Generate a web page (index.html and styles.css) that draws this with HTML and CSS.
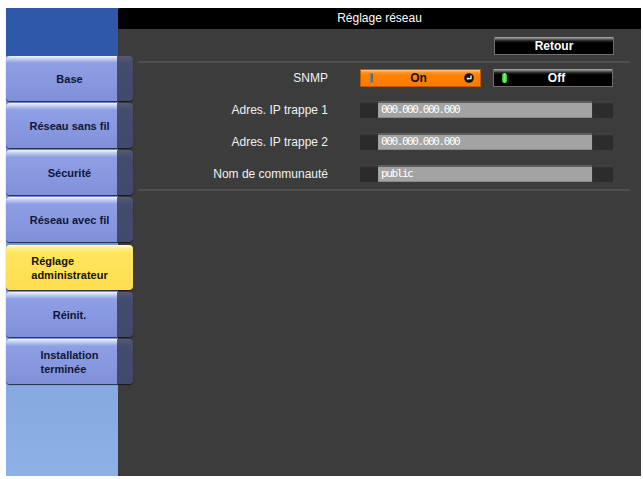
FILE: index.html
```html
<!DOCTYPE html>
<html lang="fr">
<head>
  <meta charset="UTF-8">
  <meta name="viewport" content="width=device-width, initial-scale=1.0">
  <title>Réglage réseau</title>
  <link rel="stylesheet" href="styles.css">
</head>
<body>

<div class="screen">

  <!-- Menu tabs -->
  <nav class="sidebar">
    <div class="sidebar-head"></div>
    <ul class="tabs">
      <li class="tab"><span>Base</span></li>
      <li class="tab"><span>Réseau sans fil</span></li>
      <li class="tab"><span>Sécurité</span></li>
      <li class="tab"><span>Réseau avec fil</span></li>
      <li class="tab active"><span class="multi">Réglage<br>administrateur</span></li>
      <li class="tab"><span>Réinit.</span></li>
      <li class="tab"><span class="multi">Installation<br>terminée</span></li>
    </ul>
  </nav>

  <!-- Settings panel -->
  <main class="panel">
    <div class="titlebar">Réglage réseau</div>
    <div class="panel-body">
      <div class="toolbar">
        <button class="btn-dark">Retour</button>
      </div>
      <hr class="rule">

      <div class="form">
        <label>SNMP</label>
        <div class="toggle">
          <button class="opt opt-on">
            <i class="knob"></i>
            <span class="opt-text">On</span>
            <svg class="enter" width="10" height="10" viewBox="0 0 10 10">
              <circle cx="5" cy="5" r="4.8" fill="#111"/>
              <path d="M7 2.6 V5.6 H3.6" fill="none" stroke="#fff" stroke-width="1.3"/>
              <path d="M2.4 5.6 L4.4 4 V7.2 Z" fill="#fff"/>
            </svg>
          </button>
          <button class="opt opt-off">
            <i class="led"></i>
            <span class="opt-text">Off</span>
          </button>
        </div>

        <label>Adres. IP trappe 1</label>
        <div class="field">
          <span class="field-cap"></span>
          <span class="field-value">000.000.000.000</span>
          <span class="field-end"></span>
        </div>

        <label>Adres. IP trappe 2</label>
        <div class="field">
          <span class="field-cap"></span>
          <span class="field-value">000.000.000.000</span>
          <span class="field-end"></span>
        </div>

        <label>Nom de communauté</label>
        <div class="field">
          <span class="field-cap"></span>
          <span class="field-value">public</span>
          <span class="field-end"></span>
        </div>
      </div>

      <hr class="rule rule-bottom">
    </div>
  </main>

</div>

</body>
</html>
```

FILE: styles.css
```css
/* Global */
* {
  box-sizing: border-box;
  margin: 0;
  padding: 0;
}
body {
  background: #fff;
  font-family: "Liberation Sans", Arial, sans-serif;
}
.screen {
  display: flex;
  width: 635px;
  height: 468px;
  margin: 8px 0 0 6px;
}

/* Sidebar */
.sidebar {
  width: 112px;
  flex-shrink: 0;
  position: relative;
  z-index: 1;
  background: linear-gradient(#6a8bc8, #8db1e6);
}
.sidebar-head {
  height: 48px;
  background: #2e58aa;
}
.tabs {
  list-style: none;
  display: flex;
  flex-direction: column;
  gap: 2px;
}
.tab {
  width: 127px;
  height: 45px;
  display: flex;
  align-items: center;
  justify-content: center;
  border-radius: 4px;
  font-size: 11px;
  font-weight: bold;
  color: #0e1636;
  background:
    linear-gradient(to right, transparent 111px, rgba(52, 58, 84, 0.82) 111px),
    linear-gradient(#f4f4ff 0, #c2ccf2 3px, #8f9fe4 7px, #8797e0 60%, #7f8fd8 100%);
  box-shadow: 0 1px 1px rgba(10, 14, 30, 0.8);
}
.tab:nth-child(5) {
  margin-top: 1px;
}
.tab .multi {
  display: inline-block;
  text-align: left;
  line-height: 14px;
}
.tab.active {
  background: linear-gradient(#fffbe0 0, #fff08a 3px, #ffe45e 8px, #ffde50 100%);
  color: #161000;
}

/* Panel */
.panel {
  flex: 1;
  background: #3c3c3c;
  display: flex;
  flex-direction: column;
}
.titlebar {
  height: 21px;
  line-height: 21px;
  background: #000;
  color: #fff;
  font-size: 12px;
  text-align: center;
  border-top-left-radius: 3px;
}
.panel-body {
  padding: 0 11px 0 20px;
}
.toolbar {
  display: flex;
  justify-content: flex-end;
  padding: 8px 16px 0 0;
}
.btn-dark {
  width: 120px;
  height: 18px;
  border: 1px solid #6e6e6e;
  border-top: none;
  background: linear-gradient(#b0b0b0 0, #6a6a6a 2px, #1c1c1c 4px, #000 6px);
  color: #fff;
  font: bold 12px "Liberation Sans", Arial, sans-serif;
  padding-top: 1px;
}
.rule {
  border: none;
  height: 2px;
  margin-top: 6px;
  background: linear-gradient(#555, #4a4a4a);
}
.rule-bottom {
  margin-top: 6px;
}

/* Form rows */
.form {
  display: grid;
  grid-template-columns: 190px 253px;
  grid-auto-rows: 18px;
  column-gap: 32px;
  row-gap: 14px;
  margin-top: 6px;
}
.form label {
  text-align: right;
  color: #f2f2f2;
  font-size: 12px;
  line-height: 18px;
}
.toggle {
  display: flex;
  gap: 12px;
}
.opt {
  height: 18px;
  display: flex;
  align-items: center;
  padding: 0 6px 0 8px;
  font: bold 12px "Liberation Sans", Arial, sans-serif;
}
.opt-text {
  flex: 1;
  text-align: center;
}
.opt-on {
  width: 121px;
  border: 1px solid #c05a00;
  background: linear-gradient(#ffcf9a 0, #ff9a30 2px, #ff8200 5px, #ff7a00 100%);
  color: #101010;
}
.opt-off {
  width: 120px;
  border: 1px solid #6e6e6e;
  border-top: none;
  background: linear-gradient(#b0b0b0 0, #6a6a6a 2px, #1c1c1c 4px, #000 6px);
  color: #fff;
}
.knob {
  width: 4px;
  height: 10px;
  border-radius: 2px;
  background: linear-gradient(to right, #9a9a9a, #5a5a5a);
}
.enter {
  display: block;
}
.led {
  width: 5px;
  height: 10px;
  border-radius: 3px;
  background: linear-gradient(to right, #1fa01f, #7cff6a 45%, #2ac22a);
}

/* Text fields */
.field {
  display: flex;
  height: 17px;
}
.field-cap {
  width: 18px;
  background: linear-gradient(#444 0, #2a2a2a 3px);
}
.field-value {
  flex: 1;
  background: #a3a3a3;
  border-top: 2px solid #5e5e5e;
  border-bottom: 1px solid #8a8a8a;
  color: #fff;
  font: 11px "DejaVu Sans Mono", monospace;
  letter-spacing: -1.4px;
  line-height: 13px;
  padding-left: 3px;
}
.field-end {
  width: 21px;
  background: linear-gradient(#4a4a4a 0, #2c2c2c 3px);
  border-left: 1px solid #353535;
}
```
